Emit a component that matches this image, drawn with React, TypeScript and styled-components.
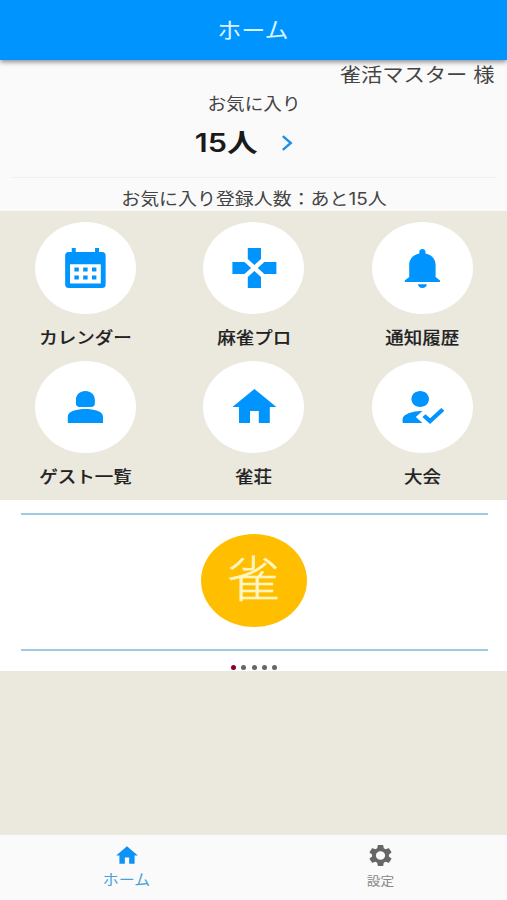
import React from "react";
import styled, { createGlobalStyle } from "styled-components";

const Global = createGlobalStyle`
  * { box-sizing: border-box; }
  body {
    margin: 0;
    background: #ebe8de;
    font-family: Inter, "Noto Sans CJK JP", sans-serif;
  }
`;

const Screen = styled.div`
  width: 507px;
  height: 900px;
  display: flex;
  flex-direction: column;
  background: #ebe8de;
  overflow: hidden;
`;

const Label = styled.span<{ $size: number; $line: number; $stretch?: number; $weight?: number; $color?: string; $stroke?: number }>`
  display: block;
  white-space: nowrap;
  font-size: ${(p) => p.$size}px;
  line-height: ${(p) => p.$line}px;
  font-weight: ${(p) => p.$weight ?? 400};
  color: ${(p) => p.$color ?? "#444"};
  -webkit-text-stroke: ${(p) => p.$stroke ?? 0}px currentColor;
  transform: scaleX(${(p) => p.$stretch ?? 1.1});
`;

const Header = styled.header`
  position: relative;
  z-index: 1;
  flex: none;
  height: 60px;
  display: flex;
  justify-content: center;
  padding: 15px 1px 0 0;
  background: #0094ff;
  box-shadow: 0 2px 5px rgba(0, 0, 0, 0.45);
`;

const Summary = styled.section`
  flex: none;
  height: 151px;
  display: flex;
  flex-direction: column;
  align-items: center;
  padding-top: 1px;
  background: #fafafa;
`;

const UserName = styled.div`
  align-self: flex-end;
  height: 31px;
  padding-right: 21px;
`;

const CountRow = styled.div`
  height: 61px;
  width: 100%;
  display: flex;
  justify-content: center;
  gap: 29px;
  padding: 13px 14px 0 0;
`;

const Chevron = styled.svg`
  width: 12px;
  height: 16px;
  margin-top: 6px;
`;

const Divider = styled.div`
  width: 485px;
  height: 1px;
  margin-bottom: 9px;
  background: #f1f1f1;
`;

const Menu = styled.nav`
  flex: none;
  height: 289px;
  display: grid;
  grid-template-columns: repeat(3, 1fr);
  grid-auto-rows: 139.3px;
  padding: 11px 0 0 1px;
`;

const MenuItem = styled.div`
  display: flex;
  flex-direction: column;
  align-items: center;
  gap: 11px;
`;

const Disc = styled.div<{ $w: number; $h: number; $bg: string }>`
  flex: none;
  display: flex;
  align-items: center;
  justify-content: center;
  width: ${(p) => p.$w}px;
  height: ${(p) => p.$h}px;
  border-radius: 50%;
  background: ${(p) => p.$bg};
`;

const Icon = styled.svg<{ $w: number; $h: number }>`
  width: ${(p) => p.$w}px;
  height: ${(p) => p.$h}px;
  fill: currentColor;
  color: #0094ff;
`;

const Carousel = styled.section`
  flex: none;
  height: 171px;
  padding: 13px 19px 0 21px;
  background: #fff;
`;

const Slide = styled.div`
  height: 138px;
  display: flex;
  align-items: center;
  justify-content: center;
  border: solid #9ecbdf;
  border-width: 2px 0;
  padding: 0 1px 3px 0;
`;

const Emblem = styled(Disc)`
  padding: 0 1px 1px 0;
`;

const Dots = styled.div`
  display: flex;
  justify-content: center;
  gap: 5.3px;
  padding: 13.5px 1px 0 0;
`;

const Dot = styled.i<{ $active: boolean }>`
  width: 5px;
  height: 5px;
  border-radius: 50%;
  background: ${(p) => (p.$active ? "#86002b" : "#666")};
`;

const TabBar = styled.footer`
  height: 65px;
  margin-top: auto;
  display: grid;
  grid-template-columns: 1fr 1fr;
  background: #fafafa;
`;

const Tab = styled.div<{ $active?: boolean }>`
  display: flex;
  flex-direction: column;
  align-items: center;
  padding-top: 8px;

  svg {
    color: ${(p) => (p.$active ? "#0d93f5" : "#666")};
  }
`;

const HOME = "M10 20v-6h4v6h5v-8h3L12 3 2 12h3v8z";

const items: { label: string; d: string }[] = [
  {
    label: "カレンダー",
    d: "M5.8 2h1.8v2h8.8V2h1.8v2h1.4C20.6 4 21.2 4.7 21.2 5.7V20.2C21.2 21.3 20.6 22 19.5 22H4.5C3.4 22 2.8 21.3 2.8 20.2V5.7C2.8 4.7 3.4 4 4.4 4h1.4zM5 10.1v9.6h14v-9.6zM7 11.8h2v2H7zM11 11.8h2v2h-2zM15 11.8h2v2h-2zM7 15.8h2v2H7zM11 15.8h2v2h-2zM15 15.8h2v2h-2z",
  },
  {
    label: "麻雀プロ",
    d: "M15 7.5V2H9v5.5l3 3 3-3zM7.5 9H2v6h5.5l3-3-3-3zM9 16.5V22h6v-5.5l-3-3-3 3zM16.5 9l-3 3 3 3H22V9h-5.5z",
  },
  {
    label: "通知履歴",
    d: "M10 20.1h4c0 1.1-.9 1.9-2 1.9s-2-.8-2-1.9zM18 16.5v-6c0-3-1.8-5.1-4.6-5.8V4c0-.9-.6-1.5-1.4-1.5s-1.4.6-1.4 1.5v.7C7.8 5.4 6 7.5 6 10.5v6l-2 1.8v.7h16v-.7z",
  },
  {
    label: "ゲスト一覧",
    d: "M12 4C9.5 4 7.7 5.8 7.7 8.5v1.8c0 1.1.6 1.7 1.7 1.7h5.2c1.1 0 1.7-.6 1.7-1.7V8.5C16.3 5.8 14.5 4 12 4zM12 13c-3.8 0-8 1-8 3.8V20h16v-3.2C20 14 15.8 13 12 13z",
  },
  { label: "雀荘", d: HOME },
  {
    label: "大会",
    d: "M9 17l3-2.94c-.39-.04-.68-.06-1-.06-2.67 0-8 1.34-8 4v2h9l-3-3zM11 12c2.21 0 4-1.79 4-4s-1.79-4-4-4-4 1.79-4 4 1.79 4 4 4M15.47 20.5L12 17l1.4-1.41 2.07 2.08 5.13-5.17 1.4 1.41z",
  },
];

const GEAR =
  "M19.43 12.98c.04-.32.07-.64.07-.98s-.03-.66-.07-.98l2.11-1.65c.19-.15.24-.42.12-.64l-2-3.46c-.12-.22-.39-.3-.61-.22l-2.49 1c-.52-.4-1.08-.73-1.69-.98l-.38-2.65C14.46 2.18 14.25 2 14 2h-4c-.25 0-.46.18-.49.42l-.38 2.65c-.61.25-1.17.59-1.69.98l-2.49-1c-.23-.09-.49 0-.61.22l-2 3.46c-.13.22-.07.49.12.64l2.11 1.65c-.04.32-.07.65-.07.98s.03.66.07.98l-2.11 1.65c-.19.15-.24.42-.12.64l2 3.46c.12.22.39.3.61.22l2.49-1c.52.4 1.08.73 1.69.98l.38 2.65c.03.24.24.42.49.42h4c.25 0 .46-.18.49-.42l.38-2.65c.61-.25 1.17-.59 1.69-.98l2.49 1c.23.09.49 0 .61-.22l2-3.46c.12-.22.07-.49-.12-.64l-2.11-1.65zM12 16.1c-2.26 0-4.1-1.84-4.1-4.1S9.74 7.9 12 7.9s4.1 1.84 4.1 4.1-1.84 4.1-4.1 4.1z";

function Glyph({ d, w, h }: { d: string; w: number; h: number }) {
  return (
    <Icon $w={w} $h={h} viewBox="0 0 24 24" preserveAspectRatio="none" aria-hidden>
      <path d={d} fillRule="evenodd" />
    </Icon>
  );
}

export default function App() {
  return (
    <Screen>
      <Global />
      <Header>
        <Label $size={21.5} $line={30} $color="#d9f2ff" $stretch={1.12}>ホーム</Label>
      </Header>
      <Summary>
        <UserName>
          <Label $size={19} $line={30} $stretch={1.12}>雀活マスター 様</Label>
        </UserName>
        <Label $size={16.8} $line={24} $stretch={1.11}>お気に入り</Label>
        <CountRow>
          <Label $size={25.5} $line={28} $weight={600} $color="#1a1a1a" $stretch={1.2}>15人</Label>
          <Chevron viewBox="0 0 12 16">
            <path d="M1.8 1.2 9.8 8l-8 6.8" fill="none" stroke="#1f8fe6" strokeWidth="2.4" />
          </Chevron>
        </CountRow>
        <Divider />
        <Label $size={16.7} $line={24} $stretch={1.135}>お気に入り登録人数：あと15人</Label>
      </Summary>
      <Menu>
        {items.map((item) => (
          <MenuItem key={item.label}>
            <Disc $w={101} $h={92} $bg="#fff">
              <Glyph d={item.d} w={52.8} h={48} />
            </Disc>
            <Label $size={16.6} $line={26} $weight={500} $stroke={0.15} $color="#222" $stretch={1.115}>{item.label}</Label>
          </MenuItem>
        ))}
      </Menu>
      <Carousel>
        <Slide>
          <Emblem $w={106} $h={93} $bg="#ffbf00">
            <Label $size={49} $line={70} $weight={300} $stroke={0.5} $color="#fff5c0" $stretch={1.08}>雀</Label>
          </Emblem>
        </Slide>
        <Dots>
          {[0, 1, 2, 3, 4].map((n) => (
            <Dot key={n} $active={n === 0} />
          ))}
        </Dots>
      </Carousel>
      <TabBar>
        <Tab $active>
          <Glyph d={HOME} w={26} h={25} />
          <Label $size={14.5} $line={24} $color="#4aa0d8" $stretch={1.1}>ホーム</Label>
        </Tab>
        <Tab>
          <Glyph d={GEAR} w={27} h={25} />
          <Label $size={12.5} $line={27} $color="#888" $stretch={1.1}>設定</Label>
        </Tab>
      </TabBar>
    </Screen>
  );
}
